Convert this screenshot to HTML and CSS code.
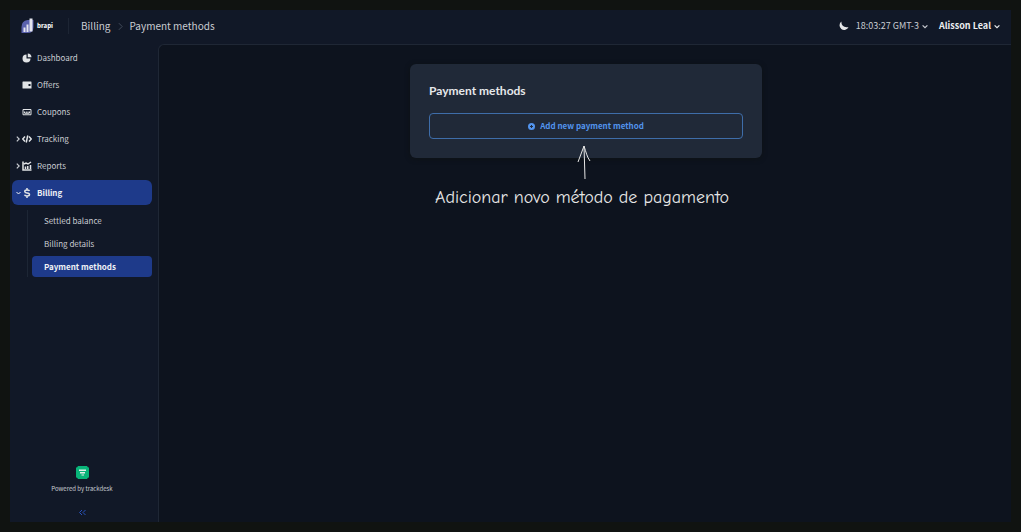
FILE: index.html
```html
<!DOCTYPE html>
<html lang="en">
<head>
<meta charset="utf-8">
<meta name="viewport" content="width=device-width, initial-scale=1">
<title>Payment methods</title>
<link rel="stylesheet" href="styles.css">
</head>
<body>
<div class="app">
  <header class="topbar">
    <a class="brand" href="#">
      <svg class="brand-mark" viewBox="0 0 26 32" aria-hidden="true"><path d="M1 30V18Q1 6 13 4H25V18Q25 30 13 30Z" fill="#5a61ad"/><path d="M5 19H9V28H5ZM11 13H15V28H11ZM17 1H23V27H17Z" fill="#e4e5ef"/></svg>
      <span>brapi</span>
    </a>
    <nav class="crumbs" aria-label="Breadcrumb">
      <a href="#">Billing</a>
      <svg class="crumb-sep" viewBox="0 0 6 10" aria-hidden="true"><path d="M1 1L5 5L1 9"/></svg>
      <span>Payment methods</span>
    </nav>
    <button class="theme" type="button" aria-label="Toggle theme"><svg viewBox="0 0 20 20" aria-hidden="true"><path d="M5 1C4 9 10 14 19 12A9.300 9.300 0 1 1 5 1Z" fill="currentColor"/></svg></button>
    <button class="menu" type="button">18:03:27 GMT-3 <svg class="caret" viewBox="0 0 10 8" aria-hidden="true"><path d="M1 2L5 6L9 2"/></svg></button>
    <button class="menu user" type="button">Alisson Leal <svg class="caret" viewBox="0 0 10 8" aria-hidden="true"><path d="M1 2L5 6L9 2"/></svg></button>
  </header>

  <aside class="sidebar">
    <nav aria-label="Main">
      <ul class="nav">
        <li><a class="item" href="#"><span class="chev"></span>
          <svg class="icon" viewBox="0 0 20 20" aria-hidden="true"><path d="M9 3V11H17A8 8 0 1 1 9 3Z" fill="currentColor"/><path d="M11.500 1A8 8 0 0 1 19 8.500H11.500Z" fill="currentColor"/></svg>
          Dashboard</a></li>
        <li><a class="item" href="#"><span class="chev"></span>
          <svg class="icon" viewBox="0 0 20 20" aria-hidden="true"><path fill-rule="evenodd" d="M2 3H18Q19 3 19 5V17H2Q1 17 1 16V4Q1 3 2 3ZM13 8H17V12H13Z" fill="currentColor"/></svg>
          Offers</a></li>
        <li><a class="item" href="#"><span class="chev"></span>
          <svg class="icon line" viewBox="0 0 20 20" aria-hidden="true"><path d="M2 5H18V15.500H2ZM5 9V12M8.500 9V12M12 9V12M15 9V12M5 12.500H15"/></svg>
          Coupons</a></li>
        <li><a class="item" href="#"><svg class="chev" viewBox="0 0 6 10" aria-hidden="true"><path d="M1 1L5 5L1 9"/></svg>
          <svg class="icon bold" viewBox="0 0 20 20" aria-hidden="true"><path d="M6 5L1.500 10L6 15M14 5L18.500 10L14 15M11.500 3L8.500 17"/></svg>
          Tracking</a></li>
        <li><a class="item" href="#"><svg class="chev" viewBox="0 0 6 10" aria-hidden="true"><path d="M1 1L5 5L1 9"/></svg>
          <svg class="icon bold" viewBox="0 0 20 20" aria-hidden="true"><path d="M2 1V18H19M7 11V16M11.500 10V16M17 8V16M4 6L8 4L12 6L18 2"/></svg>
          Reports</a></li>
        <li><a class="item active" href="#"><svg class="chev down" viewBox="0 0 10 6" aria-hidden="true"><path d="M1 1L5 5L9 1"/></svg>
          <svg class="icon bold" viewBox="0 0 20 20" aria-hidden="true"><path d="M15 6Q14 4 10 4Q5.500 4 5.500 7Q5.500 9.500 10 10Q15 10.500 15 13Q15 16 10 16Q6 16 5 13.500M10 0V4M10 16V20"/></svg>
          Billing</a>
          <ul class="subnav">
            <li><a class="subitem" href="#">Settled balance</a></li>
            <li><a class="subitem" href="#">Billing details</a></li>
            <li><a class="subitem active" href="#" aria-current="page">Payment methods</a></li>
          </ul>
        </li>
      </ul>
    </nav>
    <footer class="powered">
      <svg class="powered-mark" viewBox="0 0 26 26" aria-hidden="true"><path d="M4 1H22L25 4V22L22 25H4L1 22V4Z" fill="#08b479" stroke="#08b479" stroke-width="2" stroke-linejoin="round"/><path d="M6 7H20V10H6ZM8 12H18V15H8ZM11 17H16V19H11Z" fill="#e3eee9"/></svg>
      <span>Powered by trackdesk</span>
      <button class="collapse" type="button" aria-label="Collapse sidebar"><svg viewBox="0 0 14 12" aria-hidden="true"><path d="M6 1L1 6L6 11M13 1L8 6L13 11"/></svg></button>
    </footer>
  </aside>

  <main class="content">
    <section class="card">
      <h1>Payment methods</h1>
      <button class="add" type="button">
        <svg viewBox="0 0 14 14" aria-hidden="true"><circle cx="7" cy="7" r="7" fill="#5294ee"/><path d="M7 4V10M4 7H10" stroke="#202938" stroke-width="2"/></svg>
        Add new payment method
      </button>
      <div class="note">
        <svg viewBox="0 0 14 36" aria-hidden="true"><path d="M8 35L7 2M1 18C3 13 5 7 7 2C9 8 10 13 13 17"/></svg>
        <span>Adicionar novo método de pagamento</span>
      </div>
    </section>
  </main>
</div>
</body>
</html>
```
FILE: styles.css
```css
* { box-sizing: border-box; }

body {
  margin: 0;
  padding: 10px;
  background: #101311;
  color: #c9ccd2;
  font-family: "Noto Sans CJK SC", "Noto Sans", sans-serif;
  font-size: 8px;
  line-height: 12px;
}

a { color: inherit; text-decoration: none; }
ul { list-style: none; margin: 0; padding: 0; }
button {
  padding: 0;
  border: 0;
  background: none;
  color: inherit;
  font: inherit;
  cursor: pointer;
}
svg { display: block; flex: none; }

.app {
  display: grid;
  grid-template: 34px 1fr / 148px 1fr;
  min-height: calc(100vh - 20px);
  background: #111827;
}

.topbar {
  grid-column: 1 / -1;
  display: flex;
  align-items: center;
  padding: 0 11px 2px;
  font-size: 10px;
  line-height: 16px;
}
.brand {
  display: flex;
  align-items: center;
  gap: 3px;
  width: 48px;
  height: 16px;
  border-right: 1px solid #1d2534;
  color: #f0f1f4;
  font-size: 6px;
  font-weight: 900;
}
.brand-mark { width: 13px; height: 16px; }
.crumbs {
  display: flex;
  align-items: center;
  gap: 7px;
  margin: 0 auto 0 12px;
}
.crumb-sep { width: 5px; height: 9px; }
.crumb-sep path { fill: none; stroke: #4c5565; stroke-width: 1; }

.theme svg { width: 10px; height: 10px; color: #e5e6e9; }
.menu {
  display: flex;
  align-items: center;
  gap: 3px;
  margin-left: 7px;
  font-size: 9px;
}
.user { margin-left: 11px; color: #eceef1; font-weight: 700; }
.caret { width: 6px; height: 5px; }
.caret path, .chev path { fill: none; stroke: currentColor; stroke-width: 2; }

.sidebar {
  display: flex;
  flex-direction: column;
  justify-content: space-between;
  padding: 1px 6px 6px 2px;
}
.nav { display: grid; gap: 2px; }
.item {
  display: flex;
  align-items: center;
  height: 25px;
  padding-left: 4px;
  border-radius: 6px;
}
.item.active, .subitem.active {
  background: #1e3a8a;
  color: #f0f2f6;
  font-weight: 700;
}
.chev { width: 4px; height: 6px; margin-right: 2px; }
.chev.down { width: 5px; margin-right: 1px; }
.icon { width: 10px; height: 10px; margin-right: 5px; color: #e1e3e6; }
.line path, .bold path {
  fill: none;
  stroke: currentColor;
  stroke-width: 2;
}
.bold path { stroke-width: 3; }

.subnav {
  display: grid;
  gap: 2px;
  margin: 5px 0 0 15px;
  padding-left: 4px;
  border-left: 1px solid #1d2635;
}
.subitem {
  display: flex;
  align-items: center;
  height: 21px;
  padding-left: 12px;
  border-radius: 4px;
}

.powered {
  display: flex;
  flex-direction: column;
  align-items: center;
  font-size: 6px;
}
.powered-mark { width: 13px; height: 13px; margin-bottom: 4px; }
.collapse { margin-top: 14px; }
.collapse svg { width: 7px; height: 7px; }
.collapse path { fill: none; stroke: #2952bd; stroke-width: 2; }

.content {
  padding: 19px 19px 19px 21px;
  border: solid #1f2735;
  border-width: 1px 0 0 1px;
  border-top-left-radius: 6px;
  background: #0d131e;
}
.card {
  position: relative;
  max-width: 352px;
  margin: 0 auto;
  padding: 18px 19px 19px;
  border-radius: 6px;
  background: #202938;
  box-shadow: 0 1px 5px #0e1215;
}
h1 {
  margin: 0 0 13px;
  color: #e6e8eb;
  font-family: Lato, sans-serif;
  font-size: 12px;
  font-weight: 700;
  line-height: 18px;
}
.add {
  display: flex;
  align-items: center;
  justify-content: center;
  gap: 5px;
  width: 100%;
  height: 26px;
  border: 1px solid #3e6da9;
  border-radius: 4px;
  color: #5294ee;
  font-weight: 700;
}
.add svg { width: 7px; height: 7px; }

.note {
  position: absolute;
  top: 80px;
  left: 0;
  right: 0;
  display: flex;
  flex-direction: column;
  align-items: center;
  gap: 6px;
  padding-right: 8px;
  color: #e7e7e7;
  font-family: "Comic Neue", "Segoe Print", cursive;
  font-size: 18px;
  line-height: 24px;
  white-space: nowrap;
  pointer-events: none;
}
.note svg { width: 14px; height: 36px; margin-left: 4px; }
.note path { fill: none; stroke: #e7e7e7; stroke-width: 1; }
```
